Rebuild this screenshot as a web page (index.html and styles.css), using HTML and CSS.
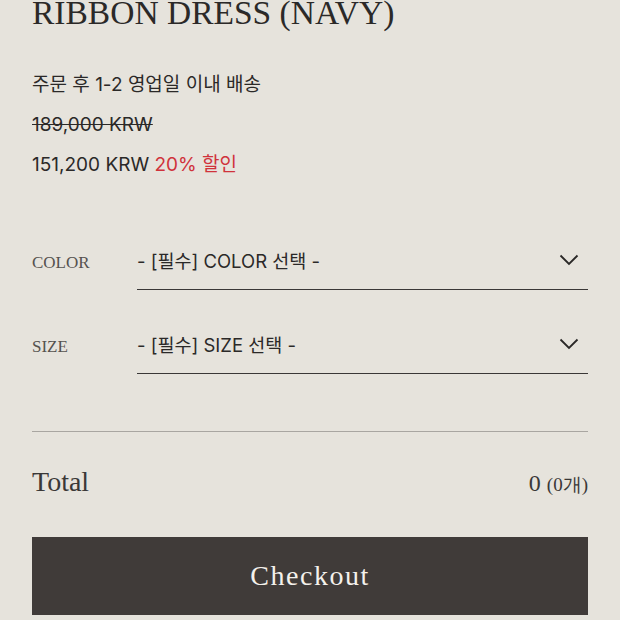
FILE: index.html
```html
<!DOCTYPE html>
<html lang="ko">
<head>
<meta charset="utf-8">
<link rel="stylesheet" href="styles.css">
</head>
<body>
<div class="page">
  <h1 class="title">RIBBON DRESS (NAVY)</h1>
  <div class="info">
    <p class="line">주문 후 1-2 영업일 이내 배송</p>
    <p class="line strike">189,000 KRW</p>
    <p class="line">151,200 KRW <span class="sale">20% 할인</span></p>
  </div>
  <div class="options">
    <div class="opt">
      <span class="opt-label">COLOR</span>
      <div class="select">
        <span>- [필수] COLOR 선택 -</span>
        <svg class="chev" width="20" height="12" viewBox="0 0 20 12"><path d="M1.5 1.5 L10 10 L18.5 1.5" fill="none" stroke="#2a2827" stroke-width="1.8"/></svg>
      </div>
    </div>
    <div class="opt">
      <span class="opt-label">SIZE</span>
      <div class="select">
        <span>- [필수] SIZE 선택 -</span>
        <svg class="chev" width="20" height="12" viewBox="0 0 20 12"><path d="M1.5 1.5 L10 10 L18.5 1.5" fill="none" stroke="#2a2827" stroke-width="1.8"/></svg>
      </div>
    </div>
  </div>
  <div class="total">
    <span class="total-label">Total</span>
    <span class="total-val">0 <span class="cnt">(0개)</span></span>
  </div>
  <button class="checkout">Checkout</button>
</div>
</body>
</html>
```
FILE: styles.css
```css
html, body {
  margin: 0;
  padding: 0;
  background: #e6e3dc;
}
body {
  overflow: hidden;
  height: 620px;
}
.page {
  padding: 0 32px;
  color: #2b2928;
}
.title {
  font-family: "Liberation Serif", serif;
  font-weight: normal;
  font-size: 33.5px;
  line-height: 40px;
  margin: -7px 0 0;
  color: #2b2928;
}
.info {
  margin-top: 32px;
  display: flex;
  flex-direction: column;
}
.line {
  margin: 0;
  font-family: Inter, "Noto Sans CJK KR", sans-serif;
  font-size: 19px;
  line-height: 40px;
  color: #2b2928;
}
.strike {
  text-decoration: line-through;
}
.sale {
  color: #d0323b;
}
.options {
  margin-top: 46px;
  display: flex;
  flex-direction: column;
  gap: 25px;
}
.opt {
  display: flex;
  align-items: center;
}
.opt-label {
  width: 105px;
  margin-top: 4px;
  font-family: "Liberation Serif", serif;
  font-size: 17px;
  color: #55524f;
}
.select {
  flex: 1;
  display: flex;
  align-items: center;
  justify-content: space-between;
  height: 58px;
  border-bottom: 1px solid #3a3837;
  font-family: Inter, "Noto Sans CJK KR", sans-serif;
  font-size: 18.5px;
  color: #2b2928;
}
.chev {
  margin-right: 9px;
}
.total {
  margin-top: 57px;
  border-top: 1px solid #a9a6a1;
  display: flex;
  justify-content: space-between;
  align-items: baseline;
  padding-top: 34px;
  height: 71px;
  box-sizing: border-box;
  font-family: "Liberation Serif", serif;
  color: #3a3837;
}
.total-label {
  font-size: 28px;
}
.total-val {
  font-size: 24px;
}
.cnt {
  font-size: 19px;
}
.checkout {
  margin-top: 35px;
  width: 100%;
  height: 78px;
  border: 0;
  background: #403b39;
  color: #f4f1ec;
  font-family: "Liberation Serif", serif;
  font-size: 28px;
  letter-spacing: 1.5px;
  display: block;
}
```
